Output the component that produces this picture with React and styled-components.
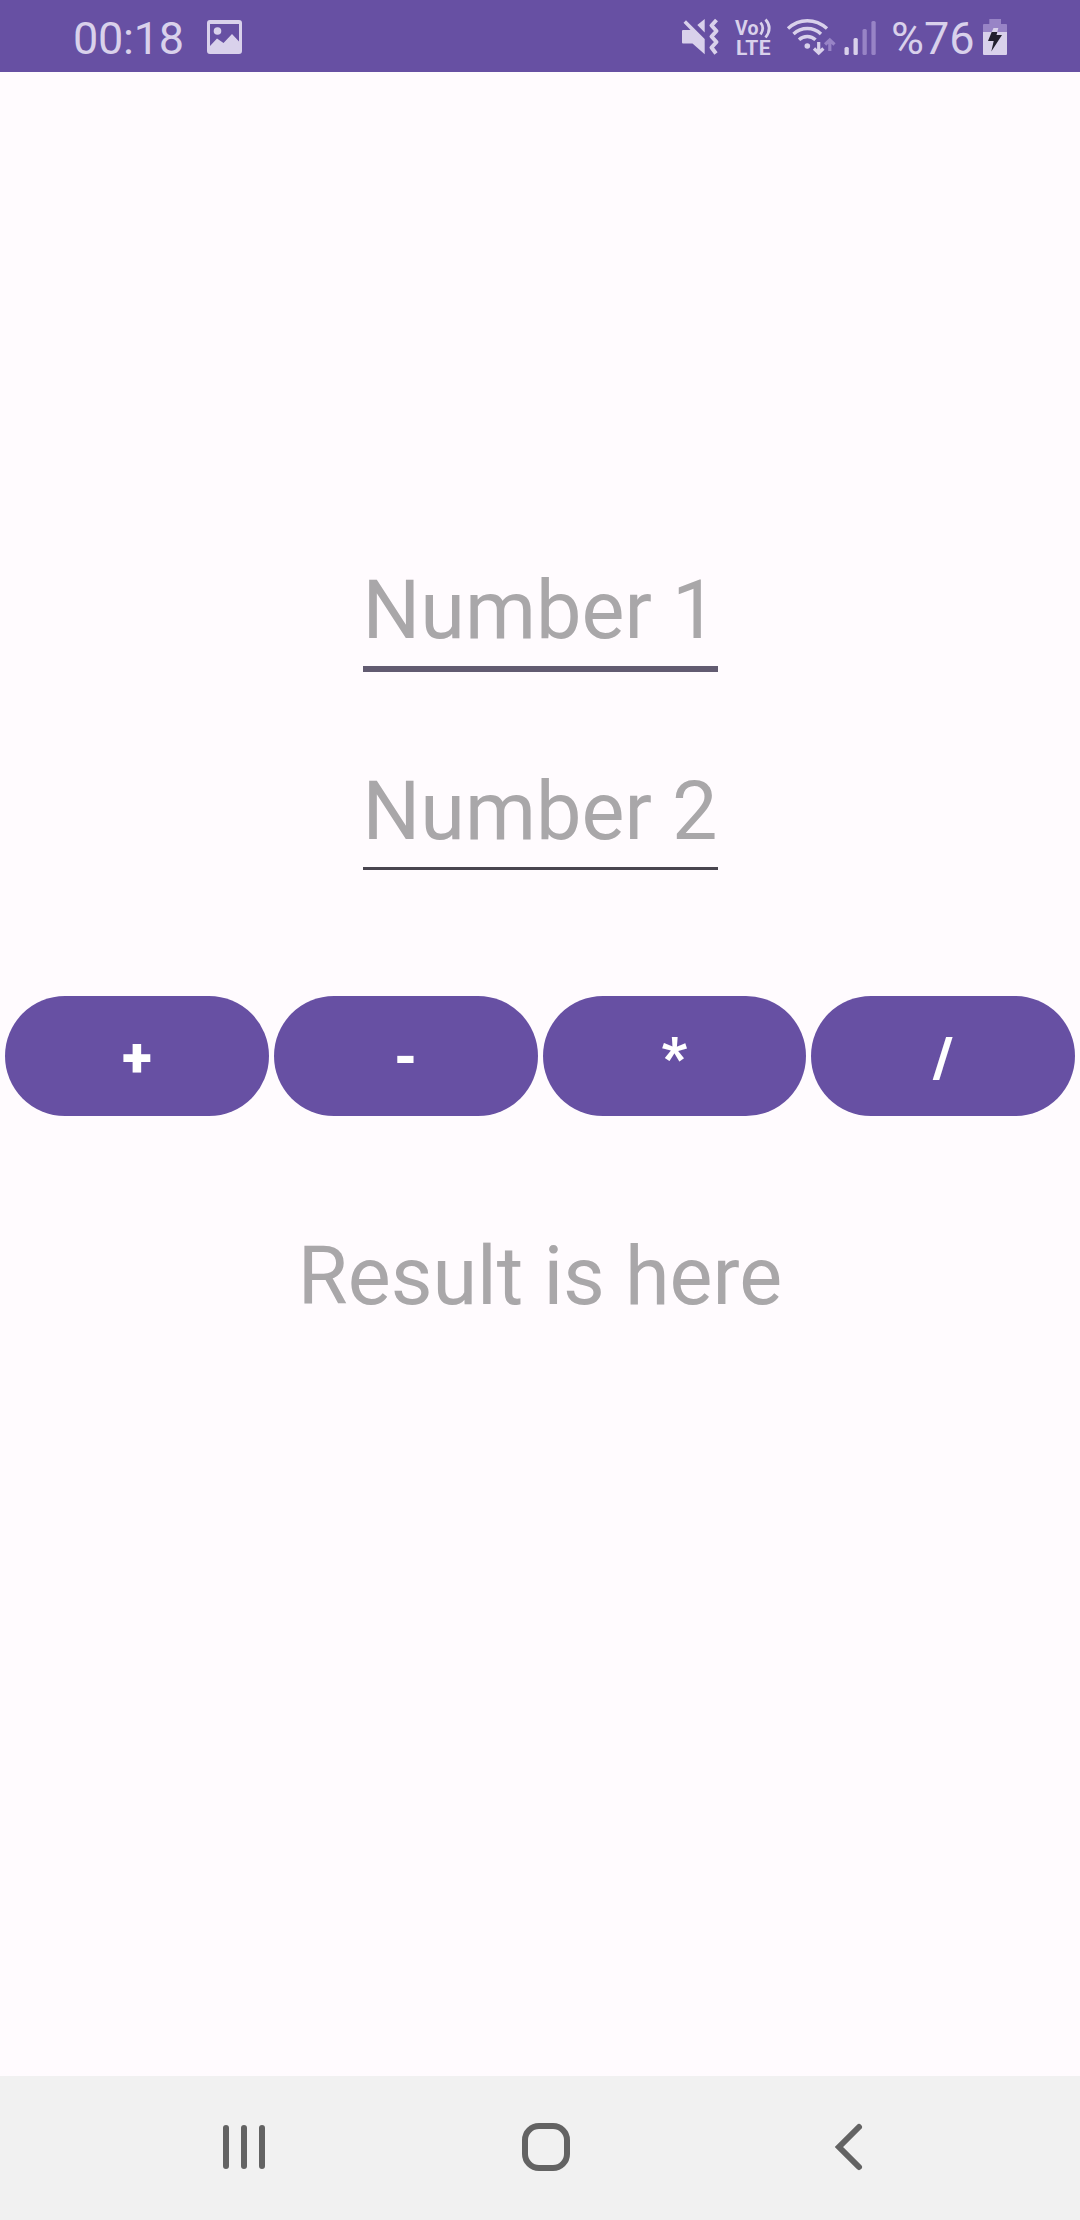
import React from "react";
import styled, { createGlobalStyle } from "styled-components";

const LIGHT = "#d9d1eb";
const DIM = "#9884c6";

const GlobalStyle = createGlobalStyle`
  * { box-sizing: border-box; }
  body { margin: 0; background: #fffbfe; }
`;

const Screen = styled.div`
  width: 1080px;
  height: 2220px;
  display: flex;
  flex-direction: column;
  background: #fffbfe;
  font-family: Roboto, "Liberation Sans", sans-serif;
`;

const StatusBar = styled.header`
  height: 72px;
  flex: none;
  display: flex;
  justify-content: space-between;
  background: #6750a3;
  padding: 0 71px 0 73px;
  color: ${LIGHT};
`;

const StatusGroup = styled.div`
  display: flex;
  align-items: flex-start;
`;

const StatusText = styled.span`
  font-size: 45px;
  line-height: 77px;
  height: 72px;
  width: ${(p) => p.$width}px;
  margin-right: ${(p) => p.$gap}px;
  letter-spacing: ${(p) => p.$tracking || 0}px;
  white-space: nowrap;
`;

const StatusIcon = styled.svg`
  display: block;
  height: 72px;
  flex: none;
  margin-right: ${(p) => p.$gap || 0}px;
`;

const Main = styled.main`
  flex: 1;
  display: flex;
  flex-direction: column;
  align-items: center;
  padding-top: 491px;
`;

const Field = styled.div`
  width: 355px;
  margin-bottom: ${(p) => p.$gap}px;
  border-bottom: ${(p) => (p.$focused ? "6px solid #625b71" : "3px solid #49454f")};
  padding-bottom: 7px;
`;

const Hint = styled.div`
  font-size: 81px;
  line-height: 96px;
  color: #a9a7a9;
  white-space: nowrap;
`;

const ButtonRow = styled.div`
  width: 100%;
  display: grid;
  grid-template-columns: repeat(4, 1fr);
  gap: 5px;
  padding: 0 5px;
  margin-bottom: 113px;
`;

const OperatorButton = styled.button`
  height: 120px;
  border: 0;
  border-radius: 60px;
  padding: 4px 0 0;
  background: #6750a3;
  color: #fff;
  font: 900 55px/116px Roboto, "Liberation Sans", sans-serif;
`;

const NavBar = styled.nav`
  height: 144px;
  flex: none;
  display: flex;
  align-items: center;
  justify-content: space-between;
  padding: 0 205px 2px 214px;
  background: #f1f1f1;
`;

const NavIcon = styled.svg`
  display: block;
  width: 60px;
  height: 60px;
  margin-left: ${(p) => p.$nudge || 0}px;
  fill: none;
  stroke: #636363;
  stroke-width: 6;
`;

function GalleryIcon() {
  return (
    <StatusIcon width="36" viewBox="207 0 36 72">
      <path
        fill={LIGHT}
        fillRule="evenodd"
        d="M210 20H239Q242 20 242 23V51Q242 54 239 54H210Q207 54 207 51V23Q207 20 210 20ZM210 24V46L217 38.5L223.5 43L232 34L239 41.5V24Z"
      />
      <circle cx="217.5" cy="31" r="3.8" fill={LIGHT} />
    </StatusIcon>
  );
}

function VibrateIcon() {
  return (
    <StatusIcon width="40" viewBox="680 0 40 72" $gap={13}>
      <path
        fill={LIGHT}
        d="M683 30H690.5L683.5 22.7L686 20.2L704.7 39V54.3L692.5 43.5H683Q682 43.5 682 42.5V31Q682 30 683 30ZM697.3 25L704.7 19V32.5Z"
      />
      <path
        fill="none"
        stroke={LIGHT}
        strokeWidth="4"
        strokeLinejoin="round"
        d="M716.5 20L711.5 25.5L716.5 31L711.5 36.5L716.5 42L711.5 47.5L716 53.5"
      />
    </StatusIcon>
  );
}

function VolteIcon() {
  return (
    <StatusIcon width="42" viewBox="733 0 42 72" $gap={11}>
      <g fill={LIGHT} fontFamily="Roboto, sans-serif" fontWeight="700">
        <text x="735" y="34.5" fontSize="19.5" textLength="23.5">Vo</text>
        <text x="736" y="54.7" fontSize="21" textLength="34.5">LTE</text>
      </g>
      <g fill="none" stroke={LIGHT} strokeWidth="2.7">
        <path d="M760.5 22.5Q765 28 760.5 34.5" />
        <path d="M765.5 19.5Q773 28 765.5 37.5" />
      </g>
    </StatusIcon>
  );
}

function WifiIcon() {
  return (
    <StatusIcon width="50" viewBox="786 0 50 72" $gap={7}>
      <g fill="none" stroke={LIGHT} strokeWidth="3.4">
        <path d="M788 28.5Q796.5 20.7 807.3 20.7T827 28.5" />
        <path d="M793.5 34Q799.5 28.5 807.3 28.5T821 34" />
        <path d="M799 39.8Q802.5 36.5 807.3 36.5T815.5 39.8" />
      </g>
      <circle cx="807.3" cy="46" r="2.8" fill={LIGHT} />
      <path d="M818.7 42V52.5M814 48.5L818.7 53L823.4 48.5" fill="none" stroke={LIGHT} strokeWidth="3.2" />
      <path d="M829.8 51V40.5M825.1 44.5L829.8 40L834.5 44.5" fill="none" stroke={DIM} strokeWidth="3.2" />
    </StatusIcon>
  );
}

function SignalIcon() {
  return (
    <StatusIcon width="34" viewBox="843 0 34 72" $gap={14}>
      <rect x="844.5" y="47" width="4.3" height="8" rx="1.5" fill={LIGHT} />
      <rect x="853.5" y="38" width="4.3" height="17" rx="1.5" fill={LIGHT} />
      <rect x="862.5" y="29" width="4.3" height="26" rx="1.5" fill={DIM} />
      <rect x="871.4" y="21" width="4.3" height="34" rx="1.5" fill={DIM} />
    </StatusIcon>
  );
}

function BatteryIcon() {
  return (
    <StatusIcon width="28" viewBox="981 0 28 72">
      <path fill={DIM} d="M989.3 19H1001V24H1006Q1007 24 1007 25V33H983V25Q983 24 984 24H989.3Z" />
      <path fill={LIGHT} d="M983 32H1007V54Q1007 55 1006 55H984Q983 55 983 54Z" />
      <path fill={LIGHT} d="M993.5 28H998.3L997.3 32H991.7Z" />
      <path fill="#221f2e" d="M991.7 32H997.3L996.5 35H1002L991.3 51.5L993.7 41H988Z" />
    </StatusIcon>
  );
}

const OPERATORS = ["+", "-", "*", "/"];

export default function App() {
  return (
    <Screen>
      <GlobalStyle />
      <StatusBar>
        <StatusGroup>
          <StatusText $width={112} $gap={22} $tracking={-0.25}>00:18</StatusText>
          <GalleryIcon />
        </StatusGroup>
        <StatusGroup>
          <VibrateIcon />
          <VolteIcon />
          <WifiIcon />
          <SignalIcon />
          <StatusText $width={84} $gap={6}>%76</StatusText>
          <BatteryIcon />
        </StatusGroup>
      </StatusBar>
      <Main>
        <Field $focused $gap={92}>
          <Hint>Number 1</Hint>
        </Field>
        <Field $gap={126}>
          <Hint>Number 2</Hint>
        </Field>
        <ButtonRow>
          {OPERATORS.map((op) => (
            <OperatorButton key={op}>{op}</OperatorButton>
          ))}
        </ButtonRow>
        <Hint>Result is here</Hint>
      </Main>
      <NavBar>
        <NavIcon viewBox="214 2117 60 60" strokeLinecap="round">
          <path d="M226 2128V2166M244 2128V2166M262 2128V2166" />
        </NavIcon>
        <NavIcon viewBox="516 2117 60 60" $nudge={3}>
          <rect x="525" y="2126" width="42" height="42" rx="14" />
        </NavIcon>
        <NavIcon viewBox="815 2117 60 60" strokeLinecap="round">
          <path d="M859 2127L839 2147L859 2167" />
        </NavIcon>
      </NavBar>
    </Screen>
  );
}
